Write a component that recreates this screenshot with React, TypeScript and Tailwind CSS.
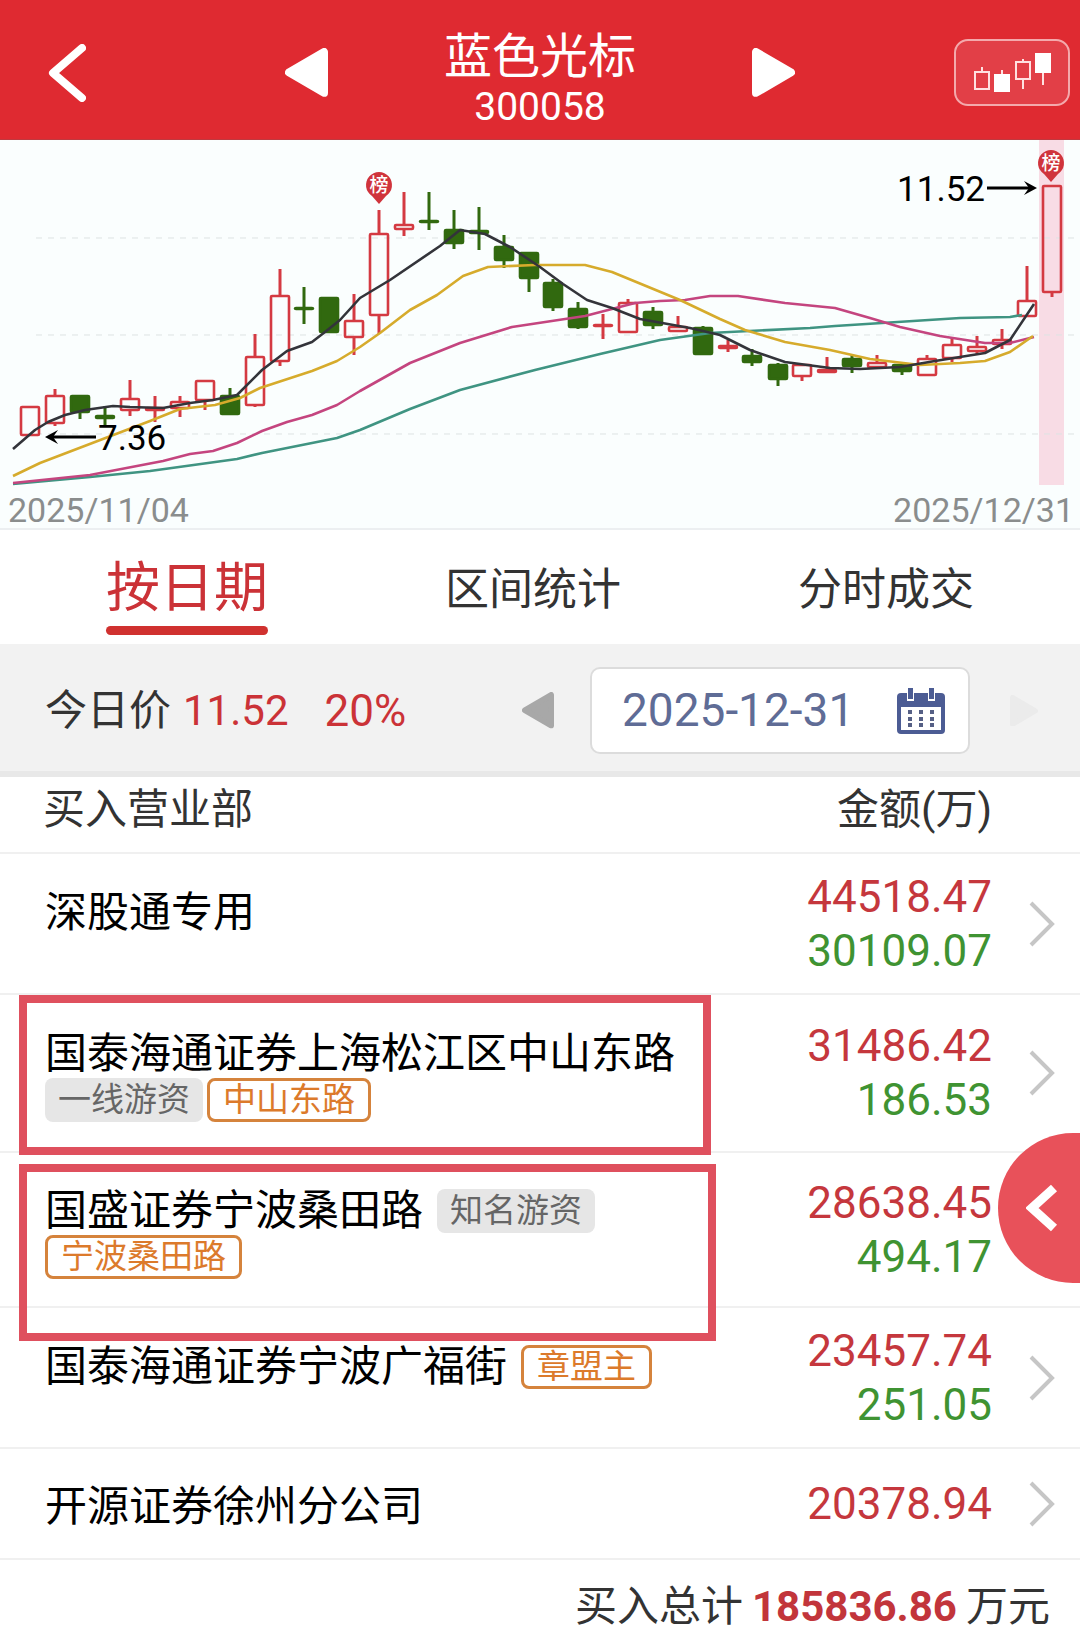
import React, { useState } from "react";

type Candle = [number, number, number, number, number, "r" | "g"];

// x, high, body top, body bottom, low, direction
const candles: Candle[] = [
  [30, 267, 267, 295, 295, "r"],
  [55, 249, 256, 283, 286, "r"],
  [80, 256, 256, 272, 279, "g"],
  [105, 266, 276, 278, 285, "g"],
  [130, 240, 259, 270, 276, "r"],
  [155, 256, 268, 270, 282, "r"],
  [180, 256, 262, 268, 277, "r"],
  [205, 241, 241, 260, 270, "r"],
  [230, 248, 256, 274, 274, "g"],
  [255, 194, 217, 265, 267, "r"],
  [280, 129, 156, 221, 226, "r"],
  [304, 147, 168, 169, 184, "g"],
  [329, 158, 158, 192, 192, "g"],
  [354, 154, 181, 197, 215, "r"],
  [379, 70, 94, 175, 194, "r"],
  [404, 52, 85, 89, 96, "r"],
  [429, 52, 81, 82, 90, "g"],
  [454, 70, 90, 103, 109, "g"],
  [479, 67, 91, 93, 110, "g"],
  [504, 95, 107, 120, 128, "g"],
  [529, 113, 113, 138, 152, "g"],
  [553, 139, 143, 167, 171, "g"],
  [578, 162, 169, 187, 189, "g"],
  [603, 174, 185, 186, 199, "r"],
  [628, 159, 163, 192, 192, "r"],
  [653, 167, 172, 185, 189, "g"],
  [678, 176, 187, 191, 191, "r"],
  [703, 186, 188, 214, 214, "g"],
  [728, 200, 206, 208, 212, "r"],
  [752, 209, 216, 222, 226, "g"],
  [778, 223, 225, 239, 246, "g"],
  [802, 225, 225, 236, 241, "r"],
  [827, 217, 230, 232, 233, "r"],
  [852, 214, 219, 226, 233, "g"],
  [877, 215, 223, 227, 229, "r"],
  [902, 224, 225, 231, 235, "g"],
  [927, 215, 219, 235, 235, "r"],
  [952, 198, 205, 218, 222, "r"],
  [977, 196, 207, 211, 214, "r"],
  [1002, 189, 200, 204, 209, "r"],
  [1027, 126, 161, 176, 176, "r"],
  [1052, 46, 46, 152, 157, "r"],
];

const lines = [
  {
    color: "#3f9482",
    points:
      "13,344 90,337 150,331 237,319 262,313 337,298 360,290 410,269 460,250 535,230 600,214 660,200 710,193 810,188 835,186 960,178 1010,177 1022,175",
  },
  {
    color: "#c4457f",
    points:
      "13,343 90,335 163,321 190,314 213,311 237,303 262,291 287,282 312,275 337,265 360,251 410,223 460,203 512,187 585,176 635,163 660,161 685,160 710,156 738,156 785,163 835,168 870,178 900,187 940,196 985,203 1010,203 1034,197",
  },
  {
    color: "#d6ab2c",
    points:
      "13,336 40,323 150,281 180,269 215,265 240,258 260,248 312,231 337,221 360,207 380,193 410,170 437,155 463,136 488,127 535,125 585,125 612,132 680,160 720,179 745,190 785,202 830,210 870,219 920,225 960,223 985,221 1010,212 1033,196",
  },
  {
    color: "#33343a",
    points:
      "13,309 35,290 48,282 65,275 85,270 113,266 130,267 163,268 190,263 213,260 237,255 262,230 287,211 312,202 325,192 340,180 360,158 390,140 440,106 460,90 485,94 510,107 540,127 563,144 587,160 612,168 640,179 690,188 720,195 750,210 785,222 830,228 860,229 900,227 935,221 985,213 1010,200 1034,164",
  },
];

const Pin = ({ x, y }: { x: number; y: number }) => (
  <g>
    <path
      d={`M${x} ${y + 19}L${x - 7} ${y + 11}A13 13 0 1 1 ${x + 7} ${y + 11}Z`}
      fill="#d0343c"
    />
    <text
      x={x}
      y={y + 7}
      fontSize="19"
      textAnchor="middle"
      fill="#fff"
      className="font-medium"
    >
      榜
    </text>
  </g>
);

const Chart = () => (
  <svg viewBox="0 0 1080 348" className="block w-full">
    <rect x="1039" y="0" width="25" height="345" fill="#f8dce5" />
    {[98, 195, 294].map((y) => (
      <line
        key={y}
        x1="36"
        x2="1075"
        y1={y}
        y2={y}
        stroke="#dde3e3"
        strokeWidth="1"
        strokeDasharray="6 6"
      />
    ))}
    {candles.map(([x, high, top, bottom, low, dir]) => {
      const color = dir === "r" ? "#d43a42" : "#31690f";
      return (
        <g key={x} stroke={color}>
          <line x1={x} x2={x} y1={high} y2={top} strokeWidth="3" />
          <line x1={x} x2={x} y1={bottom} y2={low} strokeWidth="3" />
          <rect
            x={x - 9}
            y={top}
            width="18"
            height={bottom - top}
            rx="1"
            strokeWidth="2.6"
            fill={dir === "r" ? "none" : color}
          />
        </g>
      );
    })}
    {lines.map((line) => (
      <polyline
        key={line.color}
        points={line.points}
        fill="none"
        stroke={line.color}
        strokeWidth="2.6"
        strokeLinejoin="round"
      />
    ))}
    <Pin x={379} y={45} />
    <Pin x={1051} y={23} />
    <g stroke="#000" strokeWidth="3">
      <path d="M96 297H50" />
      <path d="M987 48H1032" />
    </g>
    <path d="M45 297L58 290L53 297L58 304Z" />
    <path d="M1037 48L1024 41L1029 48L1024 55Z" />
    <text x="98" y="310" fontSize="35">
      7.36
    </text>
    <text x="985" y="61" fontSize="35" textAnchor="end">
      11.52
    </text>
  </svg>
);

const Triangle = ({ flip }: { flip?: boolean }) => (
  <svg
    viewBox="0 0 44 50"
    className={flip ? "block w-full -scale-x-100" : "block w-full"}
  >
    <path
      d="M4 25L40 4V46Z"
      fill="currentColor"
      stroke="currentColor"
      strokeWidth="8"
      strokeLinejoin="round"
    />
  </svg>
);

const Header = () => (
  <header className="grid grid-cols-[1fr_auto_1fr] items-center h-[140px] pt-[6px] bg-[#df2a31] text-white border-b border-[#c0393f]">
    <button aria-label="返回" className="w-[38px] ml-12">
      <svg viewBox="0 0 38 58" className="block w-full">
        <path
          d="M34 4L5 29L34 54"
          fill="none"
          stroke="#fff"
          strokeWidth="8"
          strokeLinecap="round"
          strokeLinejoin="round"
        />
      </svg>
    </button>
    <div className="w-[510px] flex justify-between items-center">
      <button aria-label="上一只" className="w-[43px]">
        <Triangle />
      </button>
      <div className="text-center pt-[14px]">
        <h1 className="text-[48px] leading-[54px]">蓝色光标</h1>
        <p className="text-[39px] leading-[46px]">300058</p>
      </div>
      <button aria-label="下一只" className="w-[43px]">
        <Triangle flip />
      </button>
    </div>
    <div className="flex justify-end pr-[10px]">
      <button
        aria-label="K线"
        className="w-[116px] h-[67px] rounded-[14px] border-2 border-[#f4a9ac] bg-[#e23f47]"
      >
        <svg viewBox="0 0 112 63" className="block w-full" fill="none">
          <g stroke="#ffe1e1" strokeWidth="2">
            <path d="M26 31V26M46 34V29M67 21V18M67 38V48M87 32V44" />
            <rect x="19" y="31" width="14" height="17" />
            <rect x="60" y="21" width="14" height="17" />
          </g>
          <rect x="38" y="33" width="16" height="18" fill="#fff" />
          <rect x="79" y="12" width="16" height="20" fill="#fff" />
        </svg>
      </button>
    </div>
  </header>
);

const tabs = ["按日期", "区间统计", "分时成交"];

const Tabs = () => {
  const [active, setActive] = useState(0);
  return (
    <nav className="flex justify-between h-[114px] px-[106px]">
      {tabs.map((tab, i) => (
        <button
          key={tab}
          onClick={() => setActive(i)}
          className={
            i === active
              ? "h-[105px] pt-[13px] text-[54px] leading-[62px] text-[#cb3237] relative after:absolute after:left-0 after:bottom-0 after:w-full after:h-[9px] after:rounded-full after:bg-[#d0312f]"
              : "pt-[6px] text-[44px] text-[#333]"
          }
        >
          {tab}
        </button>
      ))}
    </nav>
  );
};

const Calendar = () => (
  <svg viewBox="0 0 48 46" className="block w-[48px]">
    <rect x="0" y="5" width="48" height="41" rx="4" fill="#4c5c94" />
    <rect x="4" y="19" width="40" height="23" fill="#fff" />
    <path d="M10 0H17V13H10ZM31 0H38V13H31Z" fill="#fff" />
    <path d="M11 0H16V11H11ZM32 0H37V11H32Z" fill="#4c5c94" />
    {[22, 29, 35].map((y) =>
      [11, 22, 33].map((x) => (
        <rect key={`${x}-${y}`} x={x} y={y} width="4" height="4" fill="#555f85" />
      ))
    )}
  </svg>
);

const DateBar = () => {
  const [date, setDate] = useState("2025-12-31");
  return (
    <section className="flex items-center h-[133px] pt-[6px] bg-[#f2f2f2] border-b-[6px] border-[#e8e8e8] pl-[45px] pr-[42px]">
      <p className="flex-1 flex items-center text-[42px] text-[#cb3237] whitespace-nowrap">
        <span className="text-[#333]">今日价</span>
        <span className="ml-3">11.52</span>
        <span className="ml-9 text-[44px]">20%</span>
      </p>
      <button aria-label="前一天" className="w-[32px] text-[#a8a8a8]">
        <Triangle />
      </button>
      <label className="flex items-center justify-between w-[380px] h-[87px] ml-9 mr-10 pl-[30px] pr-[23px] rounded-[10px] border-2 border-[#dcdcdc] bg-white">
        <input
          type="text"
          aria-label="日期"
          value={date}
          onChange={(e) => setDate(e.currentTarget.value)}
          className="w-[240px] text-[46px] text-[#5f6c96] outline-none"
        />
        <Calendar />
      </label>
      <button aria-label="后一天" className="w-[28px] text-[#ebebeb]">
        <Triangle flip />
      </button>
    </section>
  );
};

const Tag = ({ name, gray }: { name: string; gray?: boolean }) => (
  <span
    className={
      gray
        ? "h-[44px] px-[13px] rounded-[8px] bg-[#e6e6e6] text-[#666] text-[33px] leading-[44px]"
        : "h-[44px] px-[13px] rounded-[8px] border-3 border-[#d5833c] text-[#dc7a2b] text-[33px] leading-[38px]"
    }
  >
    {name}
  </span>
);

const Amount = ({ buy, sell }: { buy: string; sell?: string }) => (
  <td className="border-b-2 border-[#f0f0f0] text-right text-[44px] leading-[54px]">
    <p className="text-[#c5373d]">{buy}</p>
    {sell && <p className="text-[#3f9332]">{sell}</p>}
  </td>
);

const Go = () => (
  <td className="border-b-2 border-[#f0f0f0] w-[88px]">
    <a href="#detail" aria-label="详情" className="block w-[26px] ml-[37px]">
      <svg viewBox="0 0 26 46" className="block w-full">
        <path d="M2 2L23 23L2 44" fill="none" stroke="#c6c6c6" strokeWidth="4" />
      </svg>
    </a>
  </td>
);

const nameCell = "border-b-2 border-[#f0f0f0] pl-[45px] pt-[6px] relative";
const mark = "absolute left-[19px] border-8 border-[#df505e] pointer-events-none z-10";

const BuyTable = () => (
  <table className="w-full border-separate border-spacing-0 text-[42px] leading-[48px]">
    <thead>
      <tr className="text-[#333] h-[77px] align-top leading-[66px]">
        <th className="border-b-2 border-[#f0f0f0] pl-[43px] text-left font-normal">
          买入营业部
        </th>
        <th className="border-b-2 border-[#f0f0f0] text-right font-normal">
          金额(万)
        </th>
        <th className="border-b-2 border-[#f0f0f0]"></th>
      </tr>
    </thead>
    <tbody>
      <tr className="h-[141px]">
        <td className={nameCell}>
          <p className="pb-7">深股通专用</p>
        </td>
        <Amount buy="44518.47" sell="30109.07" />
        <Go />
      </tr>
      <tr className="h-[158px]">
        <td className={nameCell}>
          <p>国泰海通证券上海松江区中山东路</p>
          <div className="flex gap-1">
            <Tag name="一线游资" gray />
            <Tag name="中山东路" />
          </div>
          <div className={`${mark} top-0 w-[692px] h-[160px]`}></div>
        </td>
        <Amount buy="31486.42" sell="186.53" />
        <Go />
      </tr>
      <tr className="h-[155px]">
        <td className={nameCell}>
          <div className="flex items-center gap-[14px]">
            <p>国盛证券宁波桑田路</p>
            <Tag name="知名游资" gray />
          </div>
          <div className="flex">
            <Tag name="宁波桑田路" />
          </div>
          <div className={`${mark} top-[11px] w-[697px] h-[177px]`}></div>
        </td>
        <Amount buy="28638.45" sell="494.17" />
        <td className="border-b-2 border-[#f0f0f0] relative">
          <button
            aria-label="展开"
            className="absolute right-0 top-[-20px] w-[82px] h-[150px] rounded-l-[75px] bg-[#e8515a] z-10"
          >
            <svg viewBox="0 0 32 48" className="block w-[32px] ml-7">
              <path
                d="M28 4L6 24L28 44"
                fill="none"
                stroke="#fff"
                strokeWidth="9"
              />
            </svg>
          </button>
        </td>
      </tr>
      <tr className="h-[141px]">
        <td className={nameCell}>
          <div className="flex items-center gap-[14px] pb-7">
            <p>国泰海通证券宁波广福街</p>
            <Tag name="章盟主" />
          </div>
        </td>
        <Amount buy="23457.74" sell="251.05" />
        <Go />
      </tr>
      <tr className="h-[111px]">
        <td className={nameCell}>
          <p>开源证券徐州分公司</p>
        </td>
        <Amount buy="20378.94" />
        <Go />
      </tr>
    </tbody>
  </table>
);

export default function App() {
  return (
    <main className="w-full overflow-hidden bg-white text-black font-['Roboto','Noto_Sans_CJK_SC',sans-serif]">
      <Header />
      <section className="bg-[#fafefe] border-b-2 border-[#eceff1]">
        <Chart />
        <div className="flex justify-between h-[40px] pl-2 pr-[6px] text-[34px] leading-[44px] text-[#8a8d8d]">
          <span>2025/11/04</span>
          <span>2025/12/31</span>
        </div>
      </section>
      <Tabs />
      <DateBar />
      <BuyTable />
      <footer className="flex justify-end items-center h-[84px] pt-2 pr-[30px] text-[42px] text-[#333]">
        买入总计
        <strong className="mx-[9px] text-[#c2353b]">185836.86</strong>
        万元
      </footer>
    </main>
  );
}
